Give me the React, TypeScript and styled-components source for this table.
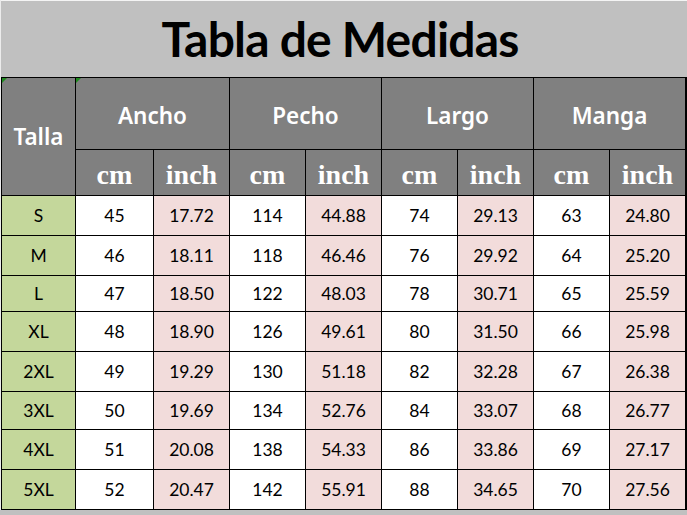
import React from "react";
import styled, { createGlobalStyle } from "styled-components";

const Global = createGlobalStyle`
  html, body { margin: 0; padding: 0; background: #c0c0c0; }
  body { width: 687px; height: 515px; overflow: hidden; }
`;

const Page = styled.div`
  width: 686px;
  border-left: 1px solid #ececec;
  background: #c0c0c0;
`;

const TitleBand = styled.div`
  height: 76px;
  border-top: 1px solid #f4f4f4;
  display: flex;
  align-items: center;
  justify-content: center;
  padding-right: 8px;
`;

const Title = styled.h1`
  margin: 0;
  font-family: Lato, "Open Sans", sans-serif;
  font-weight: 700;
  font-size: 48px;
  line-height: 78px;
  letter-spacing: -0.8px;
  color: #000;
`;

const Grid = styled.div`
  display: grid;
  grid-template-columns: 73px 77px repeat(7, 75px);
  grid-template-rows: 71px 45px 39px 39px 35px 39px 39px 37px 39px 39px;
  gap: 1px;
  background: #000;
  padding: 1px 2px 1px 1px;
  width: max-content;
`;

const Cell = styled.div<{ $bg?: string }>`
  position: relative;
  display: flex;
  align-items: center;
  justify-content: center;
  background: ${(p) => p.$bg ?? "#ffffff"};
  font-family: Lato, "Open Sans", sans-serif;
  font-size: 17.5px;
  color: #000;
`;

const HeadCell = styled(Cell)<{ $flag?: boolean; $span?: number; $rows?: number; $top?: number }>`
  background: #808080;
  color: #fff;
  font-family: "Noto Sans", "Open Sans", sans-serif;
  font-weight: 600;
  font-size: 22.5px;
  padding-top: ${(p) => p.$top ?? 0}px;
  ${(p) => (p.$span ? `grid-column: span ${p.$span};` : "")}
  ${(p) => (p.$rows ? `grid-row: span ${p.$rows};` : "")}
  &::before {
    content: "";
    display: ${(p) => (p.$flag ? "block" : "none")};
    position: absolute;
    left: 0;
    top: 0;
    width: 0;
    height: 0;
    border-top: 5px solid #1e8a1e;
    border-right: 5px solid transparent;
  }
`;

const UnitCell = styled(Cell)`
  background: #808080;
  color: #fff;
  font-family: "Liberation Serif", "Times New Roman", serif;
  font-weight: 700;
  font-size: 28px;
  padding-top: 4px;
`;

const groups = ["Ancho", "Pecho", "Largo", "Manga"];

const rows: [string, string, string, string, string, string, string, string, string][] = [
  ["S", "45", "17.72", "114", "44.88", "74", "29.13", "63", "24.80"],
  ["M", "46", "18.11", "118", "46.46", "76", "29.92", "64", "25.20"],
  ["L", "47", "18.50", "122", "48.03", "78", "30.71", "65", "25.59"],
  ["XL", "48", "18.90", "126", "49.61", "80", "31.50", "66", "25.98"],
  ["2XL", "49", "19.29", "130", "51.18", "82", "32.28", "67", "26.38"],
  ["3XL", "50", "19.69", "134", "52.76", "84", "33.07", "68", "26.77"],
  ["4XL", "51", "20.08", "138", "54.33", "86", "33.86", "69", "27.17"],
  ["5XL", "52", "20.47", "142", "55.91", "88", "34.65", "70", "27.56"],
];

export default function App() {
  return (
    <Page>
      <Global />
      <TitleBand>
        <Title>Tabla de Medidas</Title>
      </TitleBand>
      <Grid>
        <HeadCell $rows={2} $flag>
          Talla
        </HeadCell>
        {groups.map((g, i) => (
          <HeadCell key={g} $span={2} $flag={i === 0} $top={4}>
            {g}
          </HeadCell>
        ))}
        {groups.map((g) => (
          <React.Fragment key={g + "u"}>
            <UnitCell>cm</UnitCell>
            <UnitCell>inch</UnitCell>
          </React.Fragment>
        ))}
        {rows.map((r) => (
          <React.Fragment key={r[0]}>
            {r.map((v, i) => (
              <Cell
                key={i}
                $bg={i === 0 ? "#c4d79b" : i % 2 === 0 ? "#f2dcdb" : "#ffffff"}
              >
                {v}
              </Cell>
            ))}
          </React.Fragment>
        ))}
      </Grid>
    </Page>
  );
}
